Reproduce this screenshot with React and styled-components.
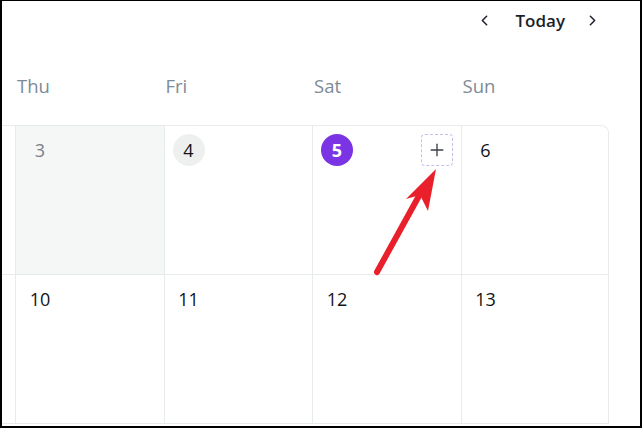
import React from "react";
import styled, { createGlobalStyle } from "styled-components";
import { ChevronLeft, ChevronRight, Plus } from "lucide-react";

const Global = createGlobalStyle`
  html, body { margin: 0; padding: 0; background: #fff; }
  body { font-family: "Open Sans", "Noto Sans", sans-serif; }
`;

const COL = 148.5;

const Frame = styled.div`
  position: relative;
  width: 642px;
  height: 428px;
  box-sizing: border-box;
  border-top: 1px solid #000;
  border-left: 2px solid #000;
  border-right: 2px solid #000;
  border-bottom: 2px solid #000;
  overflow: hidden;
  background: #fff;
`;

const Nav = styled.div`
  display: flex;
  align-items: center;
  justify-content: flex-end;
  height: 38px;
  padding-right: 36px;
`;

const NavBtn = styled.button`
  border: none;
  background: none;
  padding: 0;
  width: 24px;
  height: 24px;
  display: flex;
  align-items: center;
  justify-content: center;
  color: #1f2330;
  cursor: pointer;
`;

const TodayLabel = styled.span`
  font-size: 17px;
  font-weight: 600;
  color: #1c1f2b;
  margin: 0 15px 0 19px;
`;

const Week = styled.div`
  margin-left: ${15 - 3 * COL - 2}px;
  width: ${7 * COL}px;
`;

const Heads = styled.div`
  display: grid;
  grid-template-columns: repeat(7, ${COL}px);
  height: 86px;
  align-items: center;
`;

const Head = styled.div`
  font-size: 18.5px;
  color: #7d8a98;
  padding-left: 2px;
  margin-top: 6px;
`;

const Grid = styled.div`
  display: grid;
  grid-template-columns: repeat(7, ${COL}px);
  grid-auto-rows: 149px;
  border-top: 1px solid #e8ebeb;
  border-right: 1px solid #e8ebeb;
  border-top-right-radius: 8px;
  overflow: hidden;
`;

const Cell = styled.div`
  position: relative;
  box-sizing: border-box;
  border-left: 1px solid #e8ebeb;
  border-bottom: 1px solid #e8ebeb;
  background: ${(p) => (p.$muted ? "#f5f7f6" : "#fff")};
  padding: 8px 8px;
`;

const DateBadge = styled.div`
  width: 32px;
  height: 32px;
  border-radius: 50%;
  display: flex;
  align-items: center;
  justify-content: center;
  font-size: 18px;
  font-weight: ${(p) => (p.$today ? 700 : 400)};
  color: ${(p) => (p.$today ? "#fff" : p.$past ? "#7a7f86" : "#111418")};
  background: ${(p) => (p.$today ? "#7b34e4" : p.$hover ? "#eef0ef" : "transparent")};
`;

const AddBtn = styled.button`
  position: absolute;
  top: 8px;
  right: 8px;
  width: 32px;
  height: 32px;
  box-sizing: border-box;
  border: 1px dashed #cbbcec;
  border-radius: 4px;
  background: #fff;
  display: flex;
  align-items: center;
  justify-content: center;
  color: #3b3f48;
  padding: 0;
`;

const Arrow = styled.svg`
  position: absolute;
  left: 0;
  top: 0;
  pointer-events: none;
`;

const days = ["Mon", "Tue", "Wed", "Thu", "Fri", "Sat", "Sun"];
const rows = [
  [31, 1, 2, 3, 4, 5, 6],
  [7, 8, 9, 10, 11, 12, 13],
];

export default function App() {
  return (
    <>
      <Global />
      <Frame>
        <Nav>
          <NavBtn aria-label="Previous">
            <ChevronLeft size={17} strokeWidth={2.2} />
          </NavBtn>
          <TodayLabel>Today</TodayLabel>
          <NavBtn aria-label="Next">
            <ChevronRight size={17} strokeWidth={2.2} />
          </NavBtn>
        </Nav>
        <Week>
          <Heads>
            {days.map((d) => (
              <Head key={d}>{d}</Head>
            ))}
          </Heads>
          <Grid>
            {rows.map((row, ri) =>
              row.map((n, ci) => {
                const isThu = ri === 0 && ci === 3;
                const isToday = ri === 0 && ci === 5;
                return (
                  <Cell key={`${ri}-${ci}`} $muted={isThu}>
                    <DateBadge
                      $past={isThu}
                      $today={isToday}
                      $hover={ri === 0 && ci === 4}
                    >
                      {n}
                    </DateBadge>
                    {isToday && (
                      <AddBtn aria-label="Add">
                        <Plus size={20} strokeWidth={1.6} />
                      </AddBtn>
                    )}
                  </Cell>
                );
              })
            )}
          </Grid>
        </Week>
        <Arrow width="642" height="428" viewBox="0 0 642 428">
          <line
            x1="375"
            y1="271"
            x2="418"
            y2="193"
            stroke="#e9202b"
            strokeWidth="6"
            strokeLinecap="round"
          />
          <polygon points="434,168 404,198 418,194 426,210" fill="#e9202b" />
        </Arrow>
      </Frame>
    </>
  );
}
